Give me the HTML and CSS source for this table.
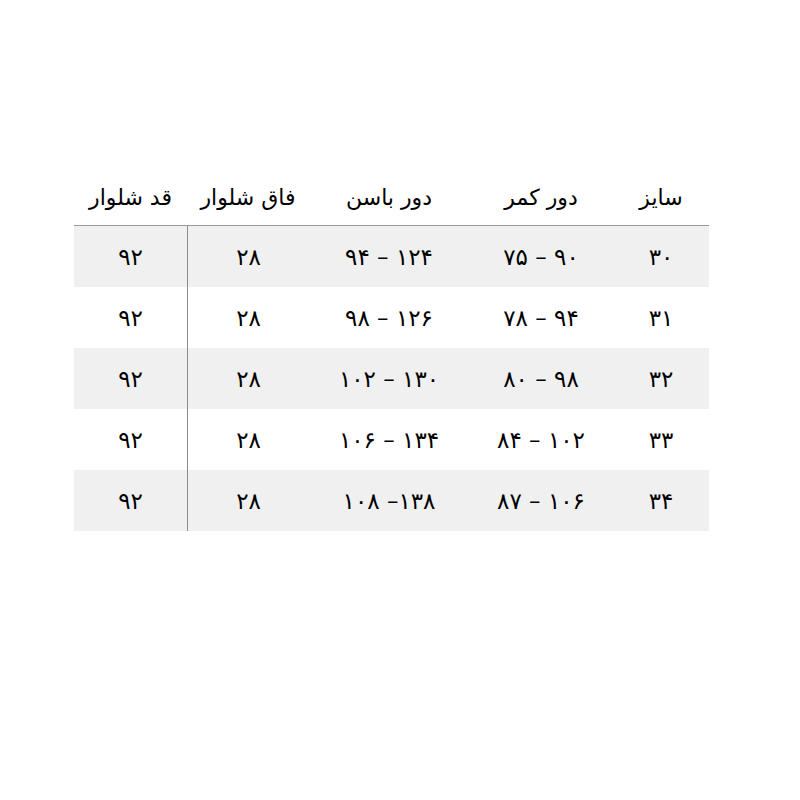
FILE: index.html
```html
<!DOCTYPE html>
<html lang="fa" dir="rtl">
<head>
<meta charset="utf-8">
<link rel="stylesheet" href="styles.css">
</head>
<body>
<div class="sheet">
  <div class="size-table">
    <div class="cell head">سایز</div>
    <div class="cell head">دور کمر</div>
    <div class="cell head">دور باسن</div>
    <div class="cell head">فاق شلوار</div>
    <div class="cell head">قد شلوار</div>

    <div class="cell shade">۳۰</div>
    <div class="cell shade"><span dir="ltr">۷۵ – ۹۰</span></div>
    <div class="cell shade"><span dir="ltr">۹۴ – ۱۲۴</span></div>
    <div class="cell shade sep">۲۸</div>
    <div class="cell shade">۹۲</div>

    <div class="cell">۳۱</div>
    <div class="cell"><span dir="ltr">۷۸ – ۹۴</span></div>
    <div class="cell"><span dir="ltr">۹۸ – ۱۲۶</span></div>
    <div class="cell sep">۲۸</div>
    <div class="cell">۹۲</div>

    <div class="cell shade">۳۲</div>
    <div class="cell shade"><span dir="ltr">۸۰ – ۹۸</span></div>
    <div class="cell shade"><span dir="ltr">۱۰۲ – ۱۳۰</span></div>
    <div class="cell shade sep">۲۸</div>
    <div class="cell shade">۹۲</div>

    <div class="cell">۳۳</div>
    <div class="cell"><span dir="ltr">۸۴ – ۱۰۲</span></div>
    <div class="cell"><span dir="ltr">۱۰۶ – ۱۳۴</span></div>
    <div class="cell sep">۲۸</div>
    <div class="cell">۹۲</div>

    <div class="cell shade">۳۴</div>
    <div class="cell shade"><span dir="ltr">۸۷ – ۱۰۶</span></div>
    <div class="cell shade"><span dir="ltr">۱۰۸ –۱۳۸</span></div>
    <div class="cell shade sep">۲۸</div>
    <div class="cell shade">۹۲</div>
  </div>
</div>
</body>
</html>
```

FILE: styles.css
```css
html, body {
  margin: 0;
  padding: 0;
  background: #ffffff;
}

.sheet {
  width: 800px;
  height: 800px;
  padding-top: 170px;
  box-sizing: border-box;
}

.size-table {
  margin-right: 91px;
  width: 635px;
  display: grid;
  grid-template-columns: 96px 144px 160px 122px 113px;
  grid-template-rows: 56px repeat(5, 61px);
  font-family: "DejaVu Sans", sans-serif;
  font-size: 22px;
  color: #000000;
}

.cell {
  display: flex;
  align-items: center;
  justify-content: center;
  font-size: 23px;
}

.head {
  font-size: 22px;
  border-bottom: 1px solid #999999;
}

.shade {
  background: #f0f0f0;
}

.sep {
  border-left: 1px solid #8c8c8c;
}
```
